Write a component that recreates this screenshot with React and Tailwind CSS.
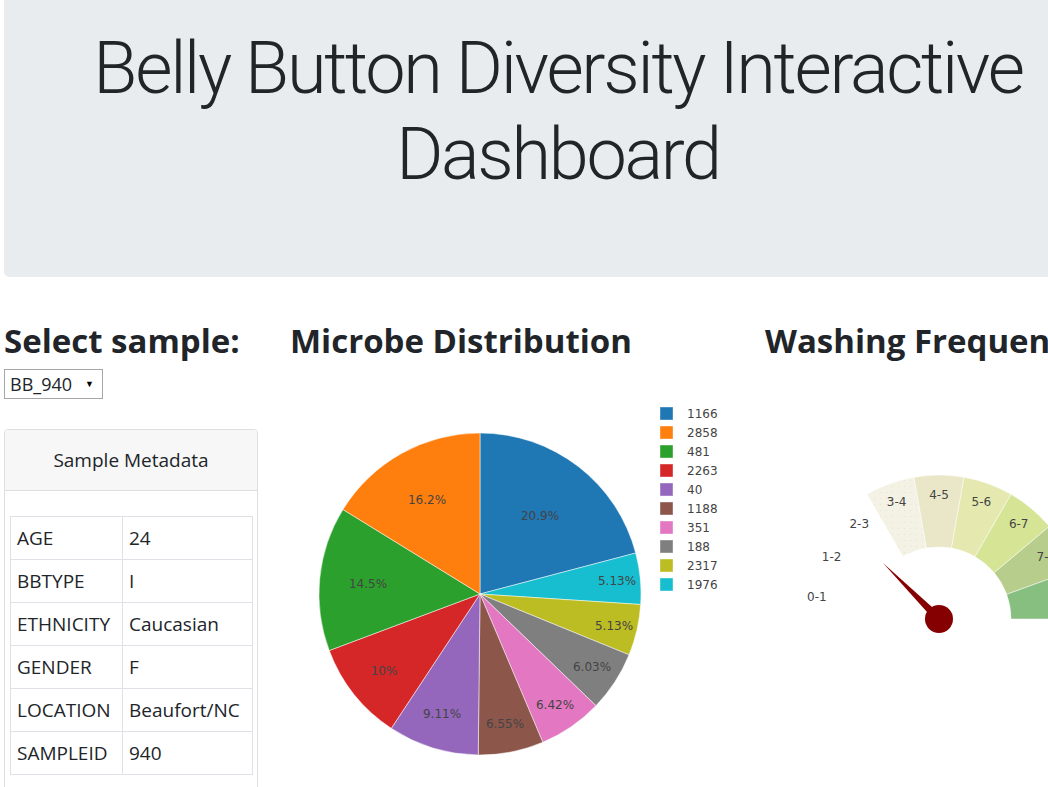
import React from "react";

const FONT = { fontFamily: "'Open Sans', 'Noto Sans', sans-serif" };
const PLOT_FONT = { fontFamily: "'DejaVu Sans', Verdana, sans-serif" };

// pie slices, clockwise from 12 o'clock
const slices = [
  { pct: 20.9, color: "#1f77b4", label: "20.9%", lx: 540, ly: 516 },
  { pct: 5.13, color: "#17becf", label: "5.13%", lx: 617, ly: 581 },
  { pct: 5.13, color: "#bcbd22", label: "5.13%", lx: 614, ly: 626 },
  { pct: 6.03, color: "#7f7f7f", label: "6.03%", lx: 592, ly: 667 },
  { pct: 6.42, color: "#e377c2", label: "6.42%", lx: 555, ly: 705 },
  { pct: 6.55, color: "#8c564b", label: "6.55%", lx: 505, ly: 724 },
  { pct: 9.11, color: "#9467bd", label: "9.11%", lx: 442, ly: 714 },
  { pct: 10, color: "#d62728", label: "10%", lx: 384, ly: 671 },
  { pct: 14.5, color: "#2ca02c", label: "14.5%", lx: 368, ly: 584 },
  { pct: 16.2, color: "#ff7f0e", label: "16.2%", lx: 427, ly: 500 },
];

const legend = [
  ["1166", "#1f77b4"],
  ["2858", "#ff7f0e"],
  ["481", "#2ca02c"],
  ["2263", "#d62728"],
  ["40", "#9467bd"],
  ["1188", "#8c564b"],
  ["351", "#e377c2"],
  ["188", "#7f7f7f"],
  ["2317", "#bcbd22"],
  ["1976", "#17becf"],
];

const metadata = [
  ["AGE", "24"],
  ["BBTYPE", "I"],
  ["ETHNICITY", "Caucasian"],
  ["GENDER", "F"],
  ["LOCATION", "Beaufort/NC"],
  ["SAMPLEID", "940"],
];

// page offsets of the two svg boxes
const PIE_X = 290;
const PIE_Y = 395;
const GAUGE_X = 765;
const GAUGE_Y = 395;

function PieChart() {
  const cx = 480 - PIE_X;
  const cy = 594 - PIE_Y;
  const r = 161;
  const total = slices.reduce((s, d) => s + d.pct, 0);
  let acc = 0;
  const pt = (deg) => [cx + r * Math.sin((deg * Math.PI) / 180), cy - r * Math.cos((deg * Math.PI) / 180)];

  return (
    <svg width="460" height="392" className="block" style={PLOT_FONT}>
      {slices.map((s, i) => {
        const a0 = (acc / total) * 360;
        acc += s.pct;
        const a1 = (acc / total) * 360;
        const [x0, y0] = pt(a0);
        const [x1, y1] = pt(a1);
        const large = a1 - a0 > 180 ? 1 : 0;
        return (
          <path
            key={i}
            d={`M${cx},${cy} L${x0},${y0} A${r},${r} 0 ${large} 1 ${x1},${y1} Z`}
            fill={s.color}
            stroke="#ffffff"
            strokeWidth="0.5"
          />
        );
      })}
      {slices.map((s, i) => (
        <text
          key={i}
          x={s.lx - PIE_X}
          y={s.ly - PIE_Y + 4}
          textAnchor="middle"
          fontSize="12"
          fill="#444444"
        >
          {s.label}
        </text>
      ))}
      {legend.map(([name, color], i) => (
        <g key={name} transform={`translate(${660 - PIE_X}, ${413 - PIE_Y + i * 19})`}>
          <rect x="0.5" y="-5.5" width="12" height="12" fill={color} stroke={color} strokeOpacity="0.6" />
          <text x="27" y="4.5" fontSize="12" fill="#444444">
            {name}
          </text>
        </g>
      ))}
    </svg>
  );
}

const gaugeColors = [
  "#ffffff",
  "#ffffff",
  "#ffffff",
  "#f4f1e5",
  "#e9e7c8",
  "#e5e8af",
  "#d5e595",
  "#b7cd8b",
  "#87bf80",
];

function Gauge() {
  const cx = 939 - GAUGE_X;
  const cy = 619 - GAUGE_Y;
  const R = 144;
  const r0 = 72;
  const p = (rad, deg) => [cx + rad * Math.cos((deg * Math.PI) / 180), cy - rad * Math.sin((deg * Math.PI) / 180)];

  return (
    <svg width="300" height="392" className="block overflow-visible" style={PLOT_FONT}>
      <defs>
        <pattern id="dots" width="6" height="6" patternUnits="userSpaceOnUse">
          <rect width="6" height="6" fill="#f4f1e5" />
          <circle cx="1.5" cy="1.5" r="0.6" fill="#e3e1dc" />
        </pattern>
      </defs>
      {gaugeColors.map((c, i) => {
        const a0 = 180 - i * 20;
        const a1 = a0 - 20;
        const [ox0, oy0] = p(R, a0);
        const [ox1, oy1] = p(R, a1);
        const [ix1, iy1] = p(r0, a1);
        const [ix0, iy0] = p(r0, a0);
        return (
          <path
            key={i}
            d={`M${ox0},${oy0} A${R},${R} 0 0 1 ${ox1},${oy1} L${ix1},${iy1} A${r0},${r0} 0 0 0 ${ix0},${iy0} Z`}
            fill={i === 3 ? "url(#dots)" : c}
            stroke="#ffffff"
            strokeWidth="0.5"
          />
        );
      })}
      {gaugeColors.map((_, i) => {
        const [tx, ty] = p(124, 170 - i * 20);
        return (
          <text key={i} x={tx} y={ty + 4} textAnchor="middle" fontSize="12" fill="#444444">
            {`${i}-${i + 1}`}
          </text>
        );
      })}
      <path
        d={`M${cx - 3},${cy + 3} L${cx + 3},${cy - 3} L${883 - GAUGE_X},${563 - GAUGE_Y} Z`}
        fill="#850000"
      />
      <circle cx={cx} cy={cy} r="14" fill="#850000" />
    </svg>
  );
}

export default function App() {
  return (
    <div className="w-[1048px] h-[787px] overflow-hidden bg-white text-[#212529]" style={FONT}>
      {/* jumbotron */}
      <div className="ml-[4px] w-[1108px] h-[277px] bg-[#e9ecef] rounded-bl-[5px] pt-[26px]">
        <h1
          className="text-center text-[72px] leading-[86px] font-light tracking-[-2.3px]"
          style={{ fontFamily: "Roboto, 'Open Sans', sans-serif" }}
        >
          Belly Button Diversity Interactive
          <br />
          Dashboard
        </h1>
      </div>

      <div className="flex mt-[44px]">
        {/* left column */}
        <div className="ml-[4px] w-[254px] shrink-0">
          <h3 className="text-[33px] leading-[40px] font-bold whitespace-nowrap">Select sample:</h3>
          <div className="mt-[8px] w-[99px] h-[30px] border border-[#a6a6a6] flex items-center justify-between pl-[5px] pr-[8px] text-[18px]">
            <span>BB_940</span>
            <span className="text-[9px] text-black">▼</span>
          </div>
          <div className="mt-[30px] border border-[#dfdfdf] rounded-[4px] overflow-hidden">
            <div className="h-[61px] bg-[#f7f7f7] border-b border-[#dfdfdf] flex items-center justify-center text-[19px]">
              Sample Metadata
            </div>
            <div className="pt-[25px] pl-[5px] pr-[4px] pb-[20px]">
              <table className="w-full border-collapse text-[19px]">
                <tbody>
                  {metadata.map(([k, v]) => (
                    <tr key={k} className="h-[43px]">
                      <td className="w-[112px] border border-[#dee2e6] pl-[6px] pr-0">{k}</td>
                      <td className="border border-[#dee2e6] pl-[6px]">{v}</td>
                    </tr>
                  ))}
                </tbody>
              </table>
            </div>
          </div>
        </div>

        {/* pie column */}
        <div className="ml-[32px] w-[475px] shrink-0">
          <h3 className="text-[33px] leading-[40px] font-bold whitespace-nowrap">Microbe Distribution</h3>
          <div className="mt-[34px]">
            <PieChart />
          </div>
        </div>

        {/* gauge column */}
        <div className="w-[400px] shrink-0">
          <h3 className="text-[33px] leading-[40px] font-bold whitespace-nowrap">Washing Frequency</h3>
          <div className="mt-[34px]">
            <Gauge />
          </div>
        </div>
      </div>
    </div>
  );
}
